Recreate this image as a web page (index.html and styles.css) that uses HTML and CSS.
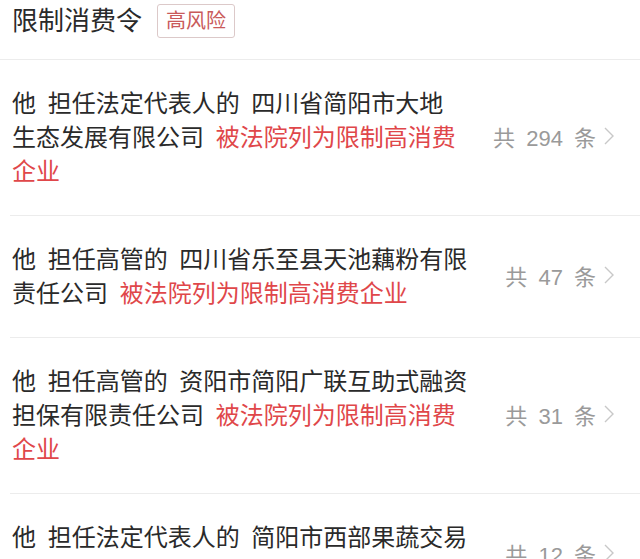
FILE: index.html
```html
<!DOCTYPE html>
<html lang="zh-CN">
<head>
    <meta charset="UTF-8">
    <meta name="viewport" content="width=device-width, initial-scale=1.0">
    <title>限制消费令</title>
    <link rel="stylesheet" href="styles.css">
</head>
<body>
    <div class="panel">
        <div class="panel-header">
            <h2 class="panel-title">限制消费令</h2>
            <span class="risk-tag">高风险</span>
        </div>

        <ul class="record-list">
            <li class="record">
                <p class="record-text">他 担任法定代表人的 四川省简阳市大地生态发展有限公司 <span class="record-alert">被法院列为限制高消费企业</span></p>
                <a class="record-count" href="#">共 294 条<svg class="chevron" width="10" height="18" viewBox="0 0 10 18"><polyline points="1,1 9,9 1,17"/></svg></a>
            </li>
            <li class="record">
                <p class="record-text">他 担任高管的 四川省乐至县天池藕粉有限责任公司 <span class="record-alert">被法院列为限制高消费企业</span></p>
                <a class="record-count" href="#">共 47 条<svg class="chevron" width="10" height="18" viewBox="0 0 10 18"><polyline points="1,1 9,9 1,17"/></svg></a>
            </li>
            <li class="record">
                <p class="record-text">他 担任高管的 资阳市简阳广联互助式融资担保有限责任公司 <span class="record-alert">被法院列为限制高消费企业</span></p>
                <a class="record-count" href="#">共 31 条<svg class="chevron" width="10" height="18" viewBox="0 0 10 18"><polyline points="1,1 9,9 1,17"/></svg></a>
            </li>
            <li class="record">
                <p class="record-text">他 担任法定代表人的 简阳市西部果蔬交易市场有限公司 <span class="record-alert">被法院列为限制高消费企业</span></p>
                <a class="record-count" href="#">共 12 条<svg class="chevron" width="10" height="18" viewBox="0 0 10 18"><polyline points="1,1 9,9 1,17"/></svg></a>
            </li>
        </ul>
    </div>
</body>
</html>
```

FILE: styles.css
```css
body {
    font-family: "Liberation Sans", "Noto Sans CJK SC", sans-serif;
    background-color: #fff;
    color: #333;
    margin: 0;
    padding: 0;
}

.panel-header {
    display: flex;
    align-items: center;
    height: 34px;
    padding: 4px 12px 21px;
    border-bottom: 1px solid #ececec;
}

.panel-title {
    margin: 0;
    font-size: 26px;
    font-weight: normal;
    color: #2a2a2a;
    line-height: 34px;
}

.risk-tag {
    margin-left: 15px;
    padding: 0 8px;
    height: 32px;
    line-height: 32px;
    font-size: 20px;
    color: #c95a5a;
    border: 1px solid #dcc9c9;
    border-radius: 3px;
}

.record-list {
    list-style: none;
    margin: 0;
    padding: 0;
}

.record {
    display: flex;
    align-items: center;
    margin-left: 10px;
    padding: 27px 26px 26px 2px;
    border-bottom: 1px solid #ececec;
}

.record-text {
    flex: 1;
    min-width: 0;
    margin: 0;
    font-size: 24px;
    line-height: 34px;
    word-spacing: 5px;
    color: #2a2a2a;
}

.record-alert {
    color: #e0474a;
}

.record-count {
    flex: none;
    display: flex;
    align-items: center;
    margin-left: 31px;
    padding-bottom: 4px;
    font-size: 22px;
    word-spacing: 5px;
    white-space: nowrap;
    color: #9a9a9a;
    text-decoration: none;
}

.chevron {
    margin-left: 8px;
}

.chevron polyline {
    fill: none;
    stroke: #c8c8c8;
    stroke-width: 1.4;
}
```
